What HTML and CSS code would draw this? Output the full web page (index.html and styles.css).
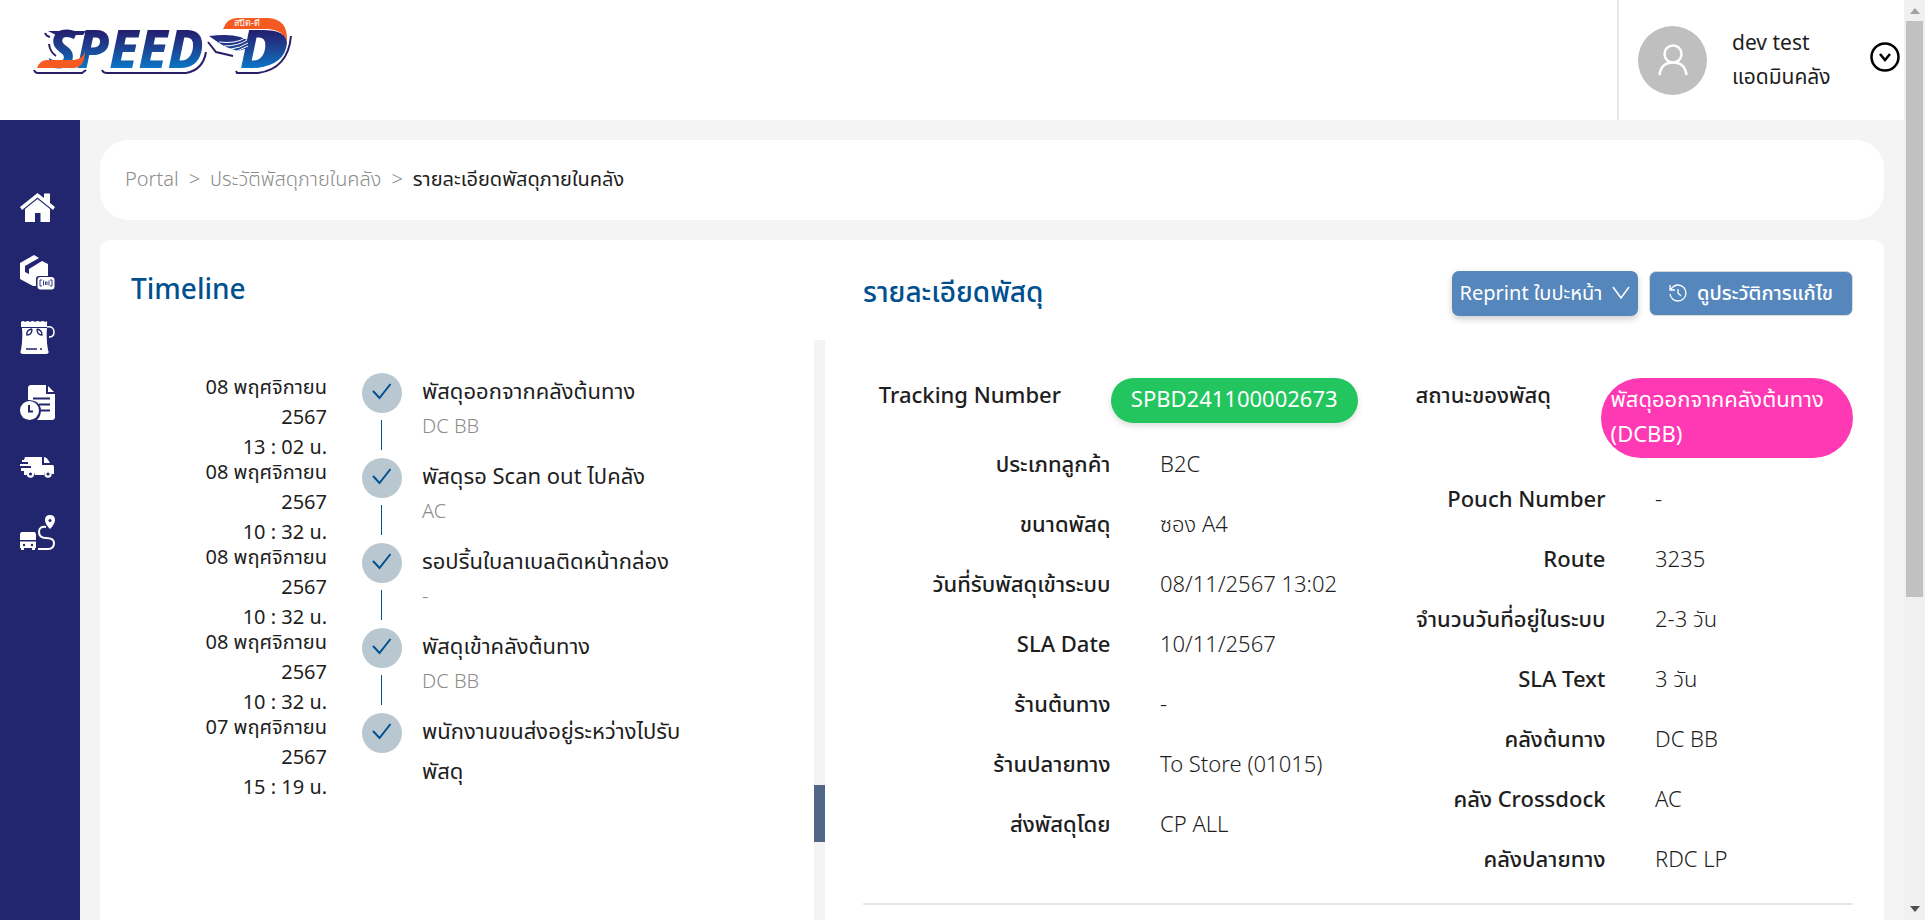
FILE: index.html
```html
<!DOCTYPE html>
<html lang="th">
<head>
<meta charset="utf-8">
<title>SPEED-D</title>
<link rel="stylesheet" href="styles.css">
</head>
<body>
<div class="window">
  <div class="app">
    <header class="header">
      <a class="logo" href="#" aria-label="SPEED-D">
        <svg width="270" height="80" viewBox="25 10 270 80">
          <defs>
            <linearGradient id="ink" x1="0" y1="28" x2="0" y2="69" gradientUnits="userSpaceOnUse">
              <stop offset="0" stop-color="#241a68"/><stop offset=".45" stop-color="#1f3f8f"/><stop offset="1" stop-color="#0a78c8"/>
            </linearGradient>
          </defs>
          <path d="M34 70Q35 73 38 73H82L86 70M102 70Q103 73 107 73H186Q203 70 206 52M236 71L237 73H258Q288 69 291 36M45 33Q46 36 50 37M49 44Q50 52 56 56M208 42L216 52L233 56" fill="none" stroke="#2a1f66" stroke-width="2"/>
          <text class="logo-text" x="48" y="68" fill="url(#ink)">SPEED</text>
          <path d="M48 31H86L83 35H56Z" fill="url(#ink)"/>
          <path d="M37 68Q40 60 47 60H74Q83 59 85 51Q85 68 73 68Z" fill="#f45a22"/>
          <text class="logo-text" x="240" y="68" fill="url(#ink)">D</text>
          <path d="M262 30Q287 30 287 43Q285 65 256 68L258 62Q270 59 273 46Q273 36 262 33Z" fill="url(#ink)"/>
          <path d="M223 29Q227 18 237 18H268Q288 19 287 41Q283 30 268 29Z" fill="#f45a22"/>
          <path d="M209 36Q240 32 251 43Q252 49 245 49L238 51L226 47L219 43Z" fill="url(#ink)"/>
          <path d="M219 42Q236 44 245 38M224 46Q238 46 247 40M231 49Q240 48 248 43M237 51L248 46" fill="none" stroke="#fff"/>
          <text class="logo-tag" x="234" y="26">สปีด-ดี</text>
        </svg>
      </a>
      <div class="user">
        <span class="avatar">
          <svg width="32" height="34" viewBox="0 0 32 34" fill="none" stroke="#fff" stroke-width="2.500"><circle cx="16" cy="11" r="8.500"/><path d="M2.500 32Q4 19.500 16 19.500T29.500 32"/></svg>
        </span>
        <div class="user-name"><span>dev test</span><span>แอดมินคลัง</span></div>
        <button class="user-menu" aria-label="เมนูผู้ใช้">
          <svg width="30" height="30" viewBox="0 0 30 30" fill="none" stroke="#000" stroke-width="2.500"><circle cx="15" cy="15" r="13.500"/><path d="M10 12L15 18L20 12"/></svg>
        </button>
      </div>
    </header>
    <div class="body">
      <nav class="sidebar">
        <a href="#" aria-label="หน้าแรก"><svg viewBox="0 0 35 35" fill="#fff"><path d="M0 17L17.500 3L24 8V3.500H30V13L35 17L33 20L17.500 7.500L2 20Z"/><path d="M5 19L17.500 9L30 19V32H20.500V23H15V32H5Z"/></svg></a>
        <a href="#" aria-label="พัสดุ"><svg viewBox="0 0 35 35" fill="#fff"><path d="M0 8L14 0L19 3L5 11V17L9 19V14L22 6L28 9V21H19Q16 21 16 24V31L13 31L0 24Z"/><rect x="17.500" y="22" width="17" height="12.500" rx="3"/><path d="M22 25H20V31H22M30 25H32V31H30M23.500 25.500V30.500M25.500 26.500V30M27 26.500V30M29 25.500V30.500" fill="none" stroke="#22266e" stroke-width=".9"/></svg></a>
        <a href="#" aria-label="ถุงพัสดุ"><svg viewBox="0 0 35 35" fill="#fff"><path d="M1 2Q3 0 5 2Q8 0 10 2Q13 0 15 2Q18 0 20 2Q23 0 25 2Q28 0 27 4V7H1Z"/><path d="M2 8H27Q26 19 28 30Q30 34 26 34H3Q-1 34 1 30Q3 19 2 8Z"/><path d="M27 7Q34 6 34 12Q34 17 29 17" fill="none" stroke="#fff" stroke-width="1.500"/><path d="M12 9Q6 10 7 15Q12 15 12 9M17 9Q22 10 22 15Q17 15 17 9M6 29H17M20 29H22" fill="none" stroke="#22266e" stroke-width="1.300"/></svg></a>
        <a href="#" aria-label="ประวัติ"><svg viewBox="0 0 35 35" fill="#fff"><path d="M11 0H26V9H35V32Q35 35 32 35H17Q21 31 21 25Q20 15 8 15V3Q8 0 11 0Z"/><path d="M28 1L34 7H28Z"/><circle cx="9.500" cy="25.500" r="9.500"/><path d="M9 20V26.500H13M13 13.500H30M19 19.500H30M21 25.500H30" fill="none" stroke="#22266e" stroke-width="2"/></svg></a>
        <a href="#" aria-label="ขนส่ง"><svg viewBox="0 0 35 35" fill="#fff"><path d="M5 7H22V15H33Q34 15 34 18V24H32Q30 20 27 21Q24 22 24 25H15Q14 21 10 21Q7 22 7 25H4V21H1V18H11V16H0V14H8V12H2V10H4Z"/><path d="M24 7Q27 7 30 13H24Z"/><circle cx="10.500" cy="24" r="3.700"/><circle cx="28" cy="24" r="3.700"/><circle cx="10.500" cy="24" r="1.600" fill="#22266e"/><circle cx="28" cy="24" r="1.600" fill="#22266e"/></svg></a>
        <a href="#" aria-label="เส้นทาง"><svg viewBox="0 0 35 35" fill="#fff"><path d="M2 17H14Q16 17 16 20V25H0V20Q0 17 2 17ZM0 26.500H16V33H15V35H12V33H4V35H1V33H0Z"/><path d="M30 0Q35 0 35 5Q35 9 30 14Q25 9 25 5Q25 0 30 0Z"/><circle cx="30" cy="5.500" r="1.500" fill="#22266e"/><circle cx="4" cy="30" r="1.200" fill="#22266e"/><circle cx="12" cy="30" r="1.200" fill="#22266e"/><path d="M26 12Q19 11 19 17Q19 23 26 23Q34 23 34 28Q34 34 28 34H18" fill="none" stroke="#fff" stroke-width="2"/></svg></a>
      </nav>
      <main class="main">
        <nav class="crumbs">
          <a href="#">Portal</a><span>&gt;</span><a href="#">ประวัติพัสดุภายในคลัง</a><span>&gt;</span><strong>รายละเอียดพัสดุภายในคลัง</strong>
        </nav>
        <div class="card">
          <section class="timeline">
            <h2>Timeline</h2>
            <div class="timeline-scroll">
              <ol class="events">
                <li><time>08 พฤศจิกายน 2567<br>13 : 02 น.</time><span class="dot"><svg viewBox="0 0 40 40"><path d="M11 18L17.500 25L28.500 11"/></svg></span><div class="event"><b>พัสดุออกจากคลังต้นทาง</b><small>DC BB</small></div></li>
                <li><time>08 พฤศจิกายน 2567<br>10 : 32 น.</time><span class="dot"><svg viewBox="0 0 40 40"><path d="M11 18L17.500 25L28.500 11"/></svg></span><div class="event"><b>พัสดุรอ Scan out ไปคลัง</b><small>AC</small></div></li>
                <li><time>08 พฤศจิกายน 2567<br>10 : 32 น.</time><span class="dot"><svg viewBox="0 0 40 40"><path d="M11 18L17.500 25L28.500 11"/></svg></span><div class="event"><b>รอปริ้นใบลาเบลติดหน้ากล่อง</b><small>-</small></div></li>
                <li><time>08 พฤศจิกายน 2567<br>10 : 32 น.</time><span class="dot"><svg viewBox="0 0 40 40"><path d="M11 18L17.500 25L28.500 11"/></svg></span><div class="event"><b>พัสดุเข้าคลังต้นทาง</b><small>DC BB</small></div></li>
                <li><time>07 พฤศจิกายน 2567<br>15 : 19 น.</time><span class="dot"><svg viewBox="0 0 40 40"><path d="M11 18L17.500 25L28.500 11"/></svg></span><div class="event"><b>พนักงานขนส่งอยู่ระหว่างไปรับพัสดุ</b></div></li>
              </ol>
              <div class="track"><div class="track-thumb"></div></div>
            </div>
          </section>
          <section class="details">
            <div class="details-head">
              <h2>รายละเอียดพัสดุ</h2>
              <button class="btn btn-raised">Reprint ใบปะหน้า
                <svg width="18" height="14" viewBox="0 0 18 14" fill="none" stroke="#fff" stroke-width="1.500"><path d="M1 1L9 12L17 1"/></svg>
              </button>
              <button class="btn btn-history">
                <svg width="18" height="18" viewBox="0 0 18 18" fill="none" stroke="#fff" stroke-width="1.300"><path d="M2 5Q5 1 9 1A8 8 0 1 1 1 10M1 1V6H6M9 5V9L12 12"/></svg>
                ดูประวัติการแก้ไข</button>
            </div>
            <div class="columns">
              <dl>
                <div class="row row-top"><dt>Tracking Number</dt><dd class="pill pill-green">SPBD241100002673</dd></div>
                <div class="row"><dt>ประเภทลูกค้า</dt><dd>B2C</dd></div>
                <div class="row"><dt>ขนาดพัสดุ</dt><dd>ซอง A4</dd></div>
                <div class="row"><dt>วันที่รับพัสดุเข้าระบบ</dt><dd>08/11/2567 13:02</dd></div>
                <div class="row"><dt>SLA Date</dt><dd>10/11/2567</dd></div>
                <div class="row"><dt>ร้านต้นทาง</dt><dd>-</dd></div>
                <div class="row"><dt>ร้านปลายทาง</dt><dd>To Store (01015)</dd></div>
                <div class="row"><dt>ส่งพัสดุโดย</dt><dd>CP ALL</dd></div>
              </dl>
              <dl>
                <div class="row row-top row-status"><dt>สถานะของพัสดุ</dt><dd class="pill pill-pink">พัสดุออกจากคลังต้นทาง (DCBB)</dd></div>
                <div class="row"><dt>Pouch Number</dt><dd>-</dd></div>
                <div class="row"><dt>Route</dt><dd>3235</dd></div>
                <div class="row"><dt>จำนวนวันที่อยู่ในระบบ</dt><dd>2-3 วัน</dd></div>
                <div class="row"><dt>SLA Text</dt><dd>3 วัน</dd></div>
                <div class="row"><dt>คลังต้นทาง</dt><dd>DC BB</dd></div>
                <div class="row"><dt>คลัง Crossdock</dt><dd>AC</dd></div>
                <div class="row"><dt>คลังปลายทาง</dt><dd>RDC LP</dd></div>
              </dl>
            </div>
          </section>
        </div>
      </main>
    </div>
  </div>
  <div class="page-track">
    <svg width="10" height="6" viewBox="0 0 10 6" fill="#a3a3a3"><path d="M0 6L5 0L10 6Z"/></svg>
    <div class="page-thumb"></div>
    <svg width="10" height="6" viewBox="0 0 10 6" fill="#505050"><path d="M0 0H10L5 6Z"/></svg>
  </div>
</div>
</body>
</html>
```
FILE: styles.css
```css
* { box-sizing: border-box; }
body { margin: 0; color: #1e1e1e; background: #f4f4f4; font: 300 20px/30px "Noto Sans", "Noto Sans Thai", "Open Sans", sans-serif; }
a { color: inherit; text-decoration: none; }
button { font: inherit; border: 0; background: none; padding: 0; cursor: pointer; }
h2, dl, dd, ol { margin: 0; padding: 0; }
h2 { color: #00508f; font-size: 28px; font-weight: 500; line-height: 36px; padding-bottom: 4px; }

.window { display: flex; height: 100vh; overflow: hidden; }
.app { flex: 1; min-width: 0; display: flex; flex-direction: column; }
.page-track { width: 21px; background: #f0f0f0; display: flex; flex-direction: column; align-items: center; padding: 8px 0; }
.page-thumb { width: 17px; height: calc(64vh - 13px); margin: 7px 0 auto; flex: none; background: #c1c1c1; }

.header { height: 120px; flex: none; background: #fff; display: flex; justify-content: space-between; }
.logo { padding: 10px 25px; }
.logo-text { font: italic 800 53px "Noto Sans", "Open Sans", sans-serif; }
.logo-tag { font: 500 9px "Noto Sans", sans-serif; fill: #fff; }
.user { border-left: 2px solid #e5e7eb; width: 287px; padding: 0 4px 0 19px; display: flex; align-items: center; }
.avatar { width: 69px; height: 69px; border-radius: 50%; background: #bfbfbf; display: grid; place-items: center; }
.user-name { display: flex; flex-direction: column; flex: 1; margin-left: 25px; padding-bottom: 3px; font-size: 21px; font-weight: 400; line-height: 34px; }
.user-menu { height: 30px; margin-bottom: 6px; }

.body { flex: 1; min-height: 0; display: flex; }
.sidebar { width: 80px; flex: none; background: #22266e; padding: 70px 20px; display: flex; flex-direction: column; gap: 30px; }
.sidebar a, .sidebar svg { display: block; width: 35px; height: 35px; }
.main { flex: 1; min-width: 0; padding: 20px; display: flex; flex-direction: column; gap: 20px; }
.crumbs { height: 80px; flex: none; border-radius: 28px; background: #fff; color: #8c8c8c; display: flex; align-items: center; gap: 10px; padding: 0 25px 2px; white-space: nowrap; }
.crumbs strong { color: #1e1e1e; font-weight: 400; }

.card { flex: none; border-radius: 10px; background: #fff; display: flex; padding: 30px 31px 100px; }
.timeline { width: 694px; flex: none; }
.timeline-scroll { display: flex; justify-content: space-between; margin-top: 30px; }
.events { list-style: none; padding-top: 33px; }
.events li { display: flex; height: 85px; }
.events time { width: 126px; margin: -1px 35px 0 70px; flex: none; text-align: right; font-weight: 400; }
.dot { width: 40px; flex: none; display: flex; flex-direction: column; }
.dot svg { height: 40px; flex: none; border-radius: 50%; background: #b9c8d0; fill: none; stroke: #00508f; stroke-width: 2; }
.events li:not(:last-child) .dot::after { content: ""; width: 1px; height: 30px; margin: 7px 19px; background: #00508f; }
.event { margin: -3px 0 0 20px; width: 280px; display: flex; flex-direction: column; gap: 1px; }
.event b { font-size: 22px; font-weight: 400; line-height: 40px; }
.event small { font-size: 20px; color: #8c8c8c; }
.track { width: 11px; height: 640px; background: #f4f4f4; }
.track-thumb { height: 57px; margin-top: 445px; background: #4f6785; }

.details { flex: 1; min-width: 0; margin-left: 38px; }
.details-head { display: flex; align-items: center; gap: 11px; height: 46px; }
.details-head h2 { margin-right: auto; }
.btn { height: 45px; border-radius: 7px; background: #5687bc; color: #fff; font-weight: 400; display: flex; align-items: center; justify-content: center; gap: 10px; white-space: nowrap; width: 186px; }
.btn-raised { box-shadow: 0 3px 6px #0003; }
.btn-history { width: 204px; border: 1px solid #d9d9d9; font-weight: 500; }
.columns { display: grid; grid-template-columns: 1fr 1fr; margin-top: 62px; padding-bottom: 13px; border-bottom: 2px solid #e5e7eb; }
.row { display: flex; padding: 10px 0 14px; font-size: 22px; line-height: 36px; white-space: nowrap; }
.row dt { width: 50%; flex: none; text-align: right; font-weight: 500; }
.row dd { margin-left: 10%; }
.row-top { padding: 0 0 12px; }
.row-top dt { width: 40%; line-height: 32px; }
.row .pill { width: 50%; padding: 3px 10px 7px; line-height: 35px; color: #fff; font-weight: 400; white-space: normal; }
.row-status dt { width: 39%; }
.row-status .pill { width: 51%; }
.pill-green { background: #22c55e; border-radius: 24px; text-align: center; box-shadow: 0 3px 6px #0002; }
.pill-pink { background: #ff38b4; border-radius: 40px; }
```
